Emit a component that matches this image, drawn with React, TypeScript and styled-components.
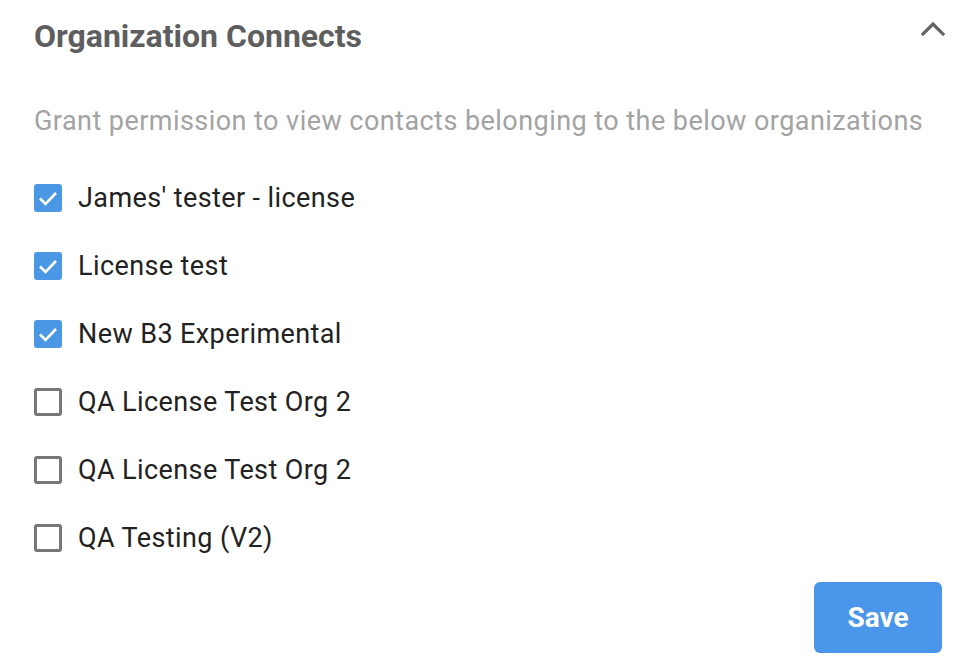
import styled, { createGlobalStyle } from 'styled-components';

const GlobalStyle = createGlobalStyle`
  html, body {
    margin: 0;
    padding: 0;
    background: #ffffff;
    font-family: Roboto, "Liberation Sans", sans-serif;
  }
`;

const orgs = [
  { name: "James' tester - license", checked: true },
  { name: 'License test', checked: true },
  { name: 'New B3 Experimental', checked: true },
  { name: 'QA License Test Org 2', checked: false },
  { name: 'QA License Test Org 2', checked: false },
  { name: 'QA Testing (V2)', checked: false },
];

const App = () => {
  return (
    <Panel>
      <GlobalStyle />
      <Header>
        <Title>Organization Connects</Title>
        <Toggle aria-label="collapse">
          <svg width="24" height="16" viewBox="0 0 24 16">
            <path d="M2 13 L12 3 L22 13" fill="none" stroke="#666" strokeWidth="3.2" strokeLinecap="square" />
          </svg>
        </Toggle>
      </Header>
      <Description>Grant permission to view contacts belonging to the below organizations</Description>
      <List>
        {orgs.map((org, i) => (
          <Row key={i}>
            <Box $checked={org.checked}>
              {org.checked && (
                <svg width="28" height="28" viewBox="0 0 28 28">
                  <path d="M6 14.5 L11.5 20 L22 9" fill="none" stroke="#fff" strokeWidth="2.6" />
                </svg>
              )}
            </Box>
            <Label>{org.name}</Label>
          </Row>
        ))}
      </List>
      <Footer>
        <SaveButton>Save</SaveButton>
      </Footer>
    </Panel>
  );
};

export default App;

const Panel = styled.div`
  width: 974px;
  height: 666px;
  box-sizing: border-box;
  padding: 14px 29px 0 34px;
  display: flex;
  flex-direction: column;
`;

const Header = styled.div`
  display: flex;
  align-items: center;
  justify-content: space-between;
  height: 44px;
`;

const Title = styled.h2`
  margin: 0;
  font-size: 32px;
  font-weight: 700;
  color: #5e5e5e;
`;

const Toggle = styled.button`
  border: none;
  background: none;
  padding: 0;
  margin-top: -14px;
  display: flex;
`;

const Description = styled.p`
  margin: 43px 0 0;
  font-size: 27px;
  letter-spacing: 0.45px;
  line-height: 40px;
  color: #a3a3a3;
`;

const List = styled.div`
  display: flex;
  flex-direction: column;
  margin-top: 23px;
`;

const Row = styled.label`
  display: flex;
  align-items: center;
  gap: 16px;
  height: 68px;
`;

const Box = styled.span<{ $checked: boolean }>`
  width: 28px;
  height: 28px;
  box-sizing: border-box;
  border-radius: 3px;
  display: flex;
  align-items: center;
  justify-content: center;
  background: ${(p) => (p.$checked ? '#4a98e4' : '#fff')};
  border: ${(p) => (p.$checked ? 'none' : '3px solid #777')};
`;

const Label = styled.span`
  font-size: 27px;
  letter-spacing: 0.4px;
  color: #222;
`;

const Footer = styled.div`
  display: flex;
  justify-content: flex-end;
  padding-right: 3px;
  margin-top: 10px;
`;

const SaveButton = styled.button`
  width: 128px;
  height: 71px;
  border: none;
  border-radius: 6px;
  background: #4a96ea;
  color: #fff;
  font-family: Roboto, "Liberation Sans", sans-serif;
  font-size: 28px;
  font-weight: 700;
`;
